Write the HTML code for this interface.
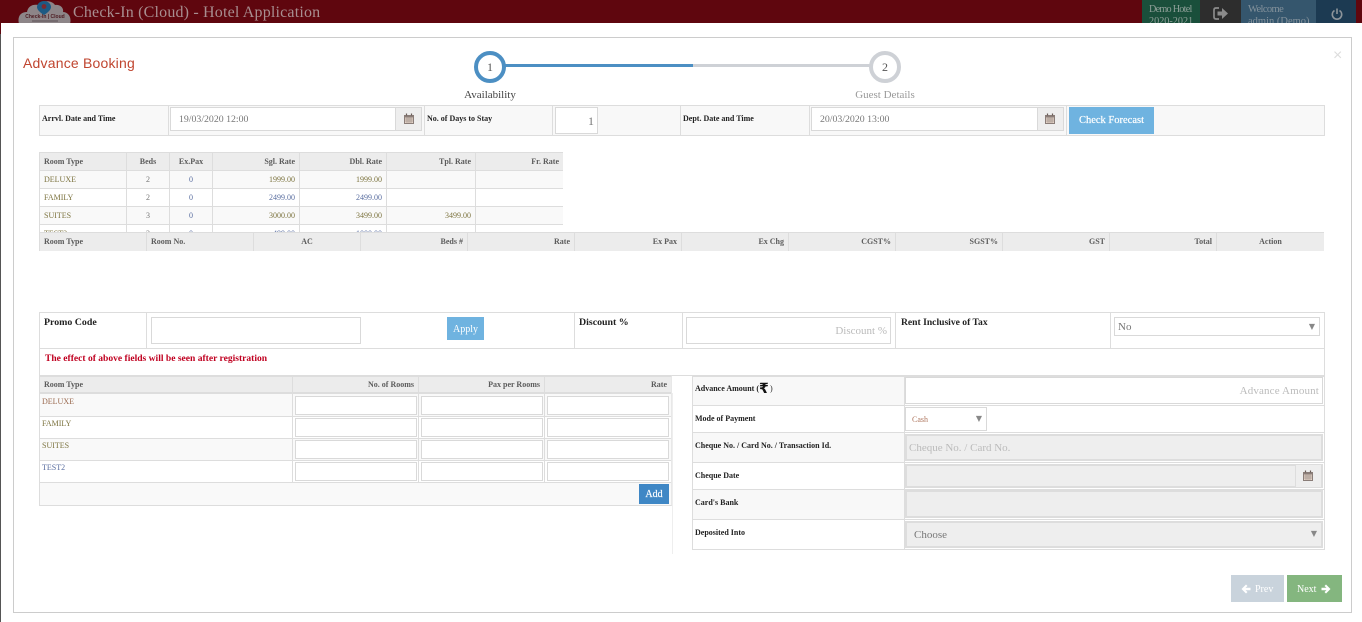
<!DOCTYPE html>
<html><head><meta charset="utf-8"><title>Advance Booking</title>
<style>
html,body{margin:0;padding:0;width:1362px;height:622px;overflow:hidden;background:#fff;font-family:"Liberation Serif",serif;color:#333}
.a{position:absolute;box-sizing:border-box;white-space:nowrap}
.in{position:absolute;box-sizing:border-box;border:1px solid #d9d9d9;background:#fff;white-space:nowrap}
.dis{background:#eee;border:2px solid #ddd}
.lb{position:absolute;font-size:8px;font-weight:bold;color:#222;white-space:nowrap;line-height:10px}
.line{position:absolute;background:#ddd}
table{border-collapse:collapse;table-layout:fixed;position:absolute;left:0;top:0}
td,th{border:1px solid #ddd;font-size:8px;padding:0 4px;height:17px;line-height:10px;overflow:hidden;white-space:nowrap;box-sizing:border-box;font-weight:normal}
th{background:#ececec;color:#5c5c5c;font-weight:bold;text-align:right}
td{color:#777;text-align:right}
.l{text-align:left}.c{text-align:center}
.o td{background:#f9f9f9}
.bl{color:#5a6ea0}.ol{color:#7d7440}
</style></head><body>

<!-- header -->
<div class="a" style="left:0;top:0;width:1362px;height:23px;background:#5f060e;overflow:hidden">
<svg class="a" style="left:18px;top:0" width="54" height="24" viewBox="0 0 54 24"><path d="M1 24C-1 16 3 12 9 12C10 6 15 4 20 5C24 0 34 0 37 5C42 4 46 8 45 12C50 12 54 17 52 24Z" fill="#8d8588"/><path d="M26 1c-4 0-7 3-7 6 0 4 7 8 7 8s7-4 7-8c0-3-3-6-7-6z" fill="#1d5a83"/><circle cx="26" cy="6.500" r="2.400" fill="#7a2a30"/><text x="27" y="18" font-size="5" font-weight="bold" fill="#4c1a20" text-anchor="middle" font-family="Liberation Sans,sans-serif">Check-In | Cloud</text><path d="M14 21H40" stroke="#5a5054" stroke-width="1"/></svg>
<div class="a" style="left:73px;top:3px;font-size:16px;line-height:19px;color:#a88e90;letter-spacing:.18px">Check-In (Cloud) - Hotel Application</div>
<div class="a" style="left:1142px;top:0;width:58px;height:23px;background:#1a4f3b;color:#8f9f98;font-size:10.200px;line-height:12px;padding:4px 0 0 7px"><span style="letter-spacing:-.75px">Demo Hotel</span><br>2020-2021</div>
<div class="a" style="left:1200px;top:0;width:41px;height:23px;background:#2d2d2d"></div>
<svg class="a" style="left:1213px;top:7px" width="16" height="13" viewBox="0 0 16 13"><path d="M6 1H3Q1 1 1 3V10Q1 12 3 12H6" fill="none" stroke="#8b8b8b" stroke-width="1.700"/><path d="M4.500 4.500H9V1L15 6.500L9 12V8.500H4.500Z" fill="#8b8b8b"/></svg>
<div class="a" style="left:1241px;top:0;width:75px;height:23px;background:#35566d;color:#84929c;font-size:10.500px;line-height:12px;padding:4px 0 0 7px"><span style="letter-spacing:-.6px">Welcome</span><br>admin (Demo)</div>
<div class="a" style="left:1316px;top:0;width:40px;height:23px;background:#1c3a52"></div>
<svg class="a" style="left:1331px;top:8px" width="12" height="12" viewBox="0 0 12 12"><path d="M3.500 2.500A4.700 4.700 0 1 0 8.500 2.500" fill="none" stroke="#8d949a" stroke-width="1.600"/><path d="M6 0.500V6" stroke="#8d949a" stroke-width="1.600"/></svg>
</div>
<div class="a" style="left:0;top:23px;width:1px;height:11px;background:#5f060e"></div>
<div class="a" style="left:0;top:34px;width:1px;height:588px;background:#555"></div>

<!-- modal -->
<div class="a" style="left:13px;top:37px;width:1339px;height:576px;border:1px solid #ccc"></div>
<div class="a" style="left:23px;top:55px;font:14px/16px 'Liberation Sans',sans-serif;color:#c0452f;letter-spacing:.2px">Advance Booking</div>
<div class="a" style="left:1333px;top:48px;font:16px/16px 'Liberation Sans',sans-serif;color:#ddd">×</div>

<!-- wizard -->
<div class="a" style="left:505px;top:64px;width:188px;height:3px;background:#4c8fc3"></div>
<div class="a" style="left:693px;top:64px;width:178px;height:3px;background:#ced1d6"></div>
<div class="a" style="left:474px;top:51px;width:32px;height:32px;border:4px solid #4c8fc3;border-radius:50%;background:#fff;text-align:center;font-size:12px;line-height:24px;color:#555">1</div>
<div class="a" style="left:869px;top:51px;width:32px;height:32px;border:4px solid #ced1d6;border-radius:50%;background:#fff;text-align:center;font-size:12px;line-height:24px;color:#555">2</div>
<div class="a" style="left:440px;top:89px;width:100px;text-align:center;font-size:11px;line-height:13px;color:#444">Availability</div>
<div class="a" style="left:835px;top:89px;width:100px;text-align:center;font-size:11px;line-height:13px;color:#999">Guest Details</div>

<!-- row 1 -->
<div class="a" style="left:39px;top:105px;width:1286px;height:31px;background:#f8f8f8;border:1px solid #ddd"></div>
<div class="line" style="left:168px;top:105px;width:1px;height:30px"></div>
<div class="line" style="left:424px;top:105px;width:1px;height:30px"></div>
<div class="line" style="left:552px;top:105px;width:1px;height:30px"></div>
<div class="line" style="left:680px;top:105px;width:1px;height:30px"></div>
<div class="line" style="left:809px;top:105px;width:1px;height:30px"></div>
<div class="line" style="left:1066px;top:105px;width:1px;height:30px"></div>
<div class="lb" style="left:42px;top:114px">Arrvl. Date and Time</div>
<div class="in" style="left:170px;top:107px;width:252px;height:24px;font-size:9.800px;line-height:24px;color:#777;padding-left:8px">19/03/2020 12:00</div>
<div class="a" style="left:395px;top:107px;width:27px;height:24px;background:#eee;border:1px solid #d9d9d9"></div>
<svg class="a" style="left:404px;top:113px" width="10" height="11" viewBox="0 0 10 11"><path d="M0 2H10V11H0Z" fill="#8a7d78"/><path d="M1 4.500H9V10H1Z" fill="#e4d4c8"/><path d="M1 6H9M1 8H9M3 4.500V10M5 4.500V10M7 4.500V10" stroke="#8a7d78" stroke-width=".5"/><path d="M2.500 .5V2.500M7.500 .5V2.500" stroke="#6a5d58" stroke-width="1.200"/></svg>
<div class="lb" style="left:427px;top:114px">No. of Days to Stay</div>
<div class="in" style="left:555px;top:107px;width:43px;height:27px;font-size:12px;line-height:26px;color:#777;text-align:right;padding-right:3px">1</div>
<div class="lb" style="left:683px;top:114px">Dept. Date and Time</div>
<div class="in" style="left:811px;top:107px;width:253px;height:24px;font-size:9.800px;line-height:24px;color:#777;padding-left:8px">20/03/2020 13:00</div>
<div class="a" style="left:1037px;top:107px;width:27px;height:24px;background:#eee;border:1px solid #d9d9d9"></div>
<svg class="a" style="left:1045px;top:113px" width="10" height="11" viewBox="0 0 10 11"><path d="M0 2H10V11H0Z" fill="#8a7d78"/><path d="M1 4.500H9V10H1Z" fill="#e4d4c8"/><path d="M1 6H9M1 8H9M3 4.500V10M5 4.500V10M7 4.500V10" stroke="#8a7d78" stroke-width=".5"/><path d="M2.500 .5V2.500M7.500 .5V2.500" stroke="#6a5d58" stroke-width="1.200"/></svg>
<div class="a" style="left:1069px;top:107px;width:85px;height:27px;background:#6fb3e0;color:#fff;font-size:10.500px;line-height:28px;text-align:center;-webkit-text-stroke:.2px #fff">Check Forecast</div>

<!-- availability table -->
<div class="a" style="left:39px;top:152px;width:524px;height:81px;overflow:hidden">
<table style="width:524px">
<colgroup><col style="width:87px"><col style="width:43px"><col style="width:43px"><col style="width:87px"><col style="width:87px"><col style="width:89px"><col style="width:88px"></colgroup>
<tr style="height:18px"><th class="l">Room Type</th><th class="c">Beds</th><th class="c">Ex.Pax</th><th>Sgl. Rate</th><th>Dbl. Rate</th><th>Tpl. Rate</th><th>Fr. Rate</th></tr>
<tr class="o" style="height:18px"><td class="l ol">DELUXE</td><td class="c">2</td><td class="c bl">0</td><td class="ol">1999.00</td><td class="ol">1999.00</td><td></td><td></td></tr>
<tr style="height:18px"><td class="l ol">FAMILY</td><td class="c">2</td><td class="c bl">0</td><td class="bl">2499.00</td><td class="bl">2499.00</td><td></td><td></td></tr>
<tr class="o" style="height:18px"><td class="l ol">SUITES</td><td class="c">3</td><td class="c bl">0</td><td class="ol">3000.00</td><td class="ol">3499.00</td><td class="ol">3499.00</td><td></td></tr>
<tr style="height:18px"><td class="l ol">TEST2</td><td class="c">2</td><td class="c bl">0</td><td class="bl">499.00</td><td class="bl">1000.00</td><td></td><td></td></tr>
</table></div>

<!-- selected rooms header -->
<div class="a" style="left:39px;top:232px;width:1285px;height:19px;overflow:hidden;background:#fff">
<table style="width:1285px">
<colgroup><col style="width:107px"><col style="width:107px"><col style="width:107px"><col style="width:107px"><col style="width:107px"><col style="width:107px"><col style="width:107px"><col style="width:107px"><col style="width:107px"><col style="width:107px"><col style="width:107px"><col style="width:108px"></colgroup>
<tr style="height:19px"><th class="l">Room Type</th><th class="l">Room No.</th><th class="c">AC</th><th>Beds #</th><th>Rate</th><th>Ex Pax</th><th>Ex Chg</th><th>CGST%</th><th>SGST%</th><th>GST</th><th>Total</th><th class="c">Action</th></tr>
</table></div>

<!-- promo -->
<div class="a" style="left:39px;top:312px;width:1286px;height:64px;border:1px solid #ddd"></div>
<div class="line" style="left:39px;top:348px;width:1286px;height:1px"></div>
<div class="line" style="left:146px;top:312px;width:1px;height:36px"></div>
<div class="line" style="left:574px;top:312px;width:1px;height:36px"></div>
<div class="line" style="left:682px;top:312px;width:1px;height:36px"></div>
<div class="line" style="left:895px;top:312px;width:1px;height:36px"></div>
<div class="line" style="left:1110px;top:312px;width:1px;height:36px"></div>
<div class="lb" style="left:44px;top:317px;font-size:9.900px;line-height:12px">Promo Code</div>
<div class="in" style="left:151px;top:317px;width:210px;height:27px"></div>
<div class="a" style="left:447px;top:317px;width:37px;height:23px;background:#6fb3e0;color:#fff;font-size:10px;line-height:25px;text-align:center">Apply</div>
<div class="lb" style="left:579px;top:317px;font-size:9.900px;line-height:12px">Discount %</div>
<div class="in" style="left:686px;top:317px;width:205px;height:27px;font-size:11px;line-height:26px;color:#bbb;text-align:right;padding-right:3px">Discount %</div>
<div class="lb" style="left:901px;top:317px;font-size:9.600px;line-height:12px">Rent Inclusive of Tax</div>
<div class="in" style="left:1114px;top:317px;width:206px;height:19px;font-size:11px;line-height:18px;color:#777;padding-left:3px">No<span class="a" style="right:4px;top:0;font-size:8px;line-height:17px;color:#888;font-family:'DejaVu Sans',sans-serif">▼</span></div>
<div class="lb" style="left:45px;top:353px;font-size:9.550px;line-height:12px;color:#c00020">The effect of above fields will be seen after registration</div>

<!-- room entry table -->
<div class="a" style="left:39px;top:375px;width:633px;height:131px;border:1px solid #ddd;border-top:2px solid #ddd;border-right-color:#e8e8e8"></div>
<div class="a" style="left:40px;top:377px;width:631px;height:16px;background:#ececec"></div>
<div class="line" style="left:40px;top:392px;width:631px;height:2px"></div>
<div class="a" style="left:40px;top:394px;width:631px;height:22px;background:#f9f9f9"></div>
<div class="a" style="left:40px;top:438px;width:631px;height:22px;background:#f9f9f9"></div>
<div class="a" style="left:40px;top:482px;width:631px;height:23px;background:#f9f9f9"></div>
<div class="line" style="left:40px;top:416px;width:631px;height:1px"></div>
<div class="line" style="left:40px;top:438px;width:631px;height:1px"></div>
<div class="line" style="left:40px;top:460px;width:631px;height:1px"></div>
<div class="line" style="left:40px;top:482px;width:631px;height:1px"></div>
<div class="line" style="left:292px;top:376px;width:1px;height:106px"></div>
<div class="line" style="left:418px;top:376px;width:1px;height:106px"></div>
<div class="line" style="left:544px;top:376px;width:1px;height:106px"></div>
<div class="a" style="left:44px;top:380px;font-size:8px;font-weight:bold;line-height:10px;color:#5c5c5c">Room Type</div>
<div class="a" style="left:300px;width:114px;top:380px;font-size:8px;font-weight:bold;line-height:10px;color:#5c5c5c;text-align:right">No. of Rooms</div>
<div class="a" style="left:426px;width:114px;top:380px;font-size:8px;font-weight:bold;line-height:10px;color:#5c5c5c;text-align:right">Pax per Rooms</div>
<div class="a" style="left:552px;width:115px;top:380px;font-size:8px;font-weight:bold;line-height:10px;color:#5c5c5c;text-align:right">Rate</div>
<div class="a" style="left:42px;top:397px;font-size:8px;line-height:10px;color:#9a6a50">DELUXE</div>
<div class="a" style="left:42px;top:419px;font-size:8px;line-height:10px;color:#7d7440">FAMILY</div>
<div class="a" style="left:42px;top:441px;font-size:8px;line-height:10px;color:#7d7440">SUITES</div>
<div class="a" style="left:42px;top:463px;font-size:8px;line-height:10px;color:#5a6ea0">TEST2</div>
<div class="in" style="left:295px;top:396px;width:122px;height:19px"></div><div class="in" style="left:421px;top:396px;width:122px;height:19px"></div><div class="in" style="left:547px;top:396px;width:122px;height:19px"></div>
<div class="in" style="left:295px;top:418px;width:122px;height:19px"></div><div class="in" style="left:421px;top:418px;width:122px;height:19px"></div><div class="in" style="left:547px;top:418px;width:122px;height:19px"></div>
<div class="in" style="left:295px;top:440px;width:122px;height:19px"></div><div class="in" style="left:421px;top:440px;width:122px;height:19px"></div><div class="in" style="left:547px;top:440px;width:122px;height:19px"></div>
<div class="in" style="left:295px;top:462px;width:122px;height:19px"></div><div class="in" style="left:421px;top:462px;width:122px;height:19px"></div><div class="in" style="left:547px;top:462px;width:122px;height:19px"></div>
<div class="a" style="left:639px;top:484px;width:30px;height:20px;background:#3f87c5;color:#fff;font-size:10px;line-height:21px;text-align:center;-webkit-text-stroke:.2px #fff">Add</div>
<div class="a" style="left:672px;top:393px;width:1px;height:161px;background:#eee"></div>

<!-- payment table -->
<div class="a" style="left:692px;top:375px;width:633px;height:175px;border:1px solid #ddd;border-top:2px solid #ddd"></div>
<div class="a" style="left:693px;top:377px;width:211px;height:28px;background:#f8f8f8"></div>
<div class="a" style="left:693px;top:433px;width:211px;height:29px;background:#f8f8f8"></div>
<div class="a" style="left:693px;top:490px;width:211px;height:29px;background:#f8f8f8"></div>
<div class="line" style="left:904px;top:376px;width:1px;height:173px"></div>
<div class="line" style="left:693px;top:405px;width:631px;height:1px"></div>
<div class="line" style="left:693px;top:432px;width:631px;height:1px"></div>
<div class="line" style="left:693px;top:462px;width:631px;height:1px"></div>
<div class="line" style="left:693px;top:489px;width:631px;height:1px"></div>
<div class="line" style="left:693px;top:519px;width:631px;height:1px"></div>
<div class="lb" style="left:695px;top:384px">Advance Amount ( </div>
<div class="a" style="left:759px;top:381px;font:bold 14px/16px 'DejaVu Sans',sans-serif;color:#111">₹</div>
<div class="lb" style="left:770px;top:384px;font-weight:normal">)</div>
<div class="lb" style="left:695px;top:414px">Mode of Payment</div>
<div class="lb" style="left:695px;top:441px">Cheque No. / Card No. / Transaction Id.</div>
<div class="lb" style="left:695px;top:471px">Cheque Date</div>
<div class="lb" style="left:695px;top:498px">Card's Bank</div>
<div class="lb" style="left:695px;top:528px">Deposited Into</div>
<div class="in" style="left:905px;top:377px;width:418px;height:27px;font-size:11px;line-height:26px;color:#bbb;text-align:right;padding-right:3px;letter-spacing:.15px">Advance Amount</div>
<div class="in" style="left:905px;top:407px;width:82px;height:24px;font-size:8px;line-height:23px;color:#b07860;padding-left:6px">Cash<span class="a" style="right:4px;top:0;font-size:8px;line-height:22px;color:#888;font-family:'DejaVu Sans',sans-serif">▼</span></div>
<div class="in dis" style="left:905px;top:434px;width:418px;height:27px;font-size:11px;line-height:24px;color:#bbb;padding-left:2px">Cheque No. / Card No.</div>
<div class="in dis" style="left:905px;top:464px;width:418px;height:24px"></div>
<div class="a" style="left:1295px;top:464px;width:27px;height:24px;background:#eee;border:1px solid #ddd"></div>
<svg class="a" style="left:1303px;top:470px" width="10" height="11" viewBox="0 0 10 11"><path d="M0 2H10V11H0Z" fill="#8a7d78"/><path d="M1 4.500H9V10H1Z" fill="#e4d4c8"/><path d="M1 6H9M1 8H9M3 4.500V10M5 4.500V10M7 4.500V10" stroke="#8a7d78" stroke-width=".5"/><path d="M2.500 .5V2.500M7.500 .5V2.500" stroke="#6a5d58" stroke-width="1.200"/></svg>
<div class="in dis" style="left:905px;top:490px;width:418px;height:28px"></div>
<div class="in dis" style="left:905px;top:521px;width:418px;height:27px;font-size:11px;line-height:24px;color:#777;padding-left:7px">Choose<span class="a" style="right:4px;top:0;font-size:8px;line-height:22px;color:#888;font-family:'DejaVu Sans',sans-serif">▼</span></div>

<!-- nav buttons -->
<div class="a" style="left:1231px;top:575px;width:53px;height:27px;background:#c9d3dc;color:#fff;font-size:10px;line-height:29px;padding-left:24px">Prev</div>
<svg class="a" style="left:1241px;top:584px" width="10" height="10" viewBox="0 0 10 10"><path d="M5 0.500L0.500 5L5 9.500L6.500 8L4.500 6.200H9.500V3.800H4.500L6.500 2Z" fill="#fff"/></svg>
<div class="a" style="left:1287px;top:575px;width:55px;height:27px;background:#84b67f;color:#fff;font-size:10px;line-height:29px;padding-left:10px">Next</div>
<svg class="a" style="left:1321px;top:584px" width="10" height="10" viewBox="0 0 10 10"><path d="M5 0.500L9.500 5L5 9.500L3.500 8L5.500 6.200H0.500V3.800H5.500L3.500 2Z" fill="#fff"/></svg>

</body></html>
